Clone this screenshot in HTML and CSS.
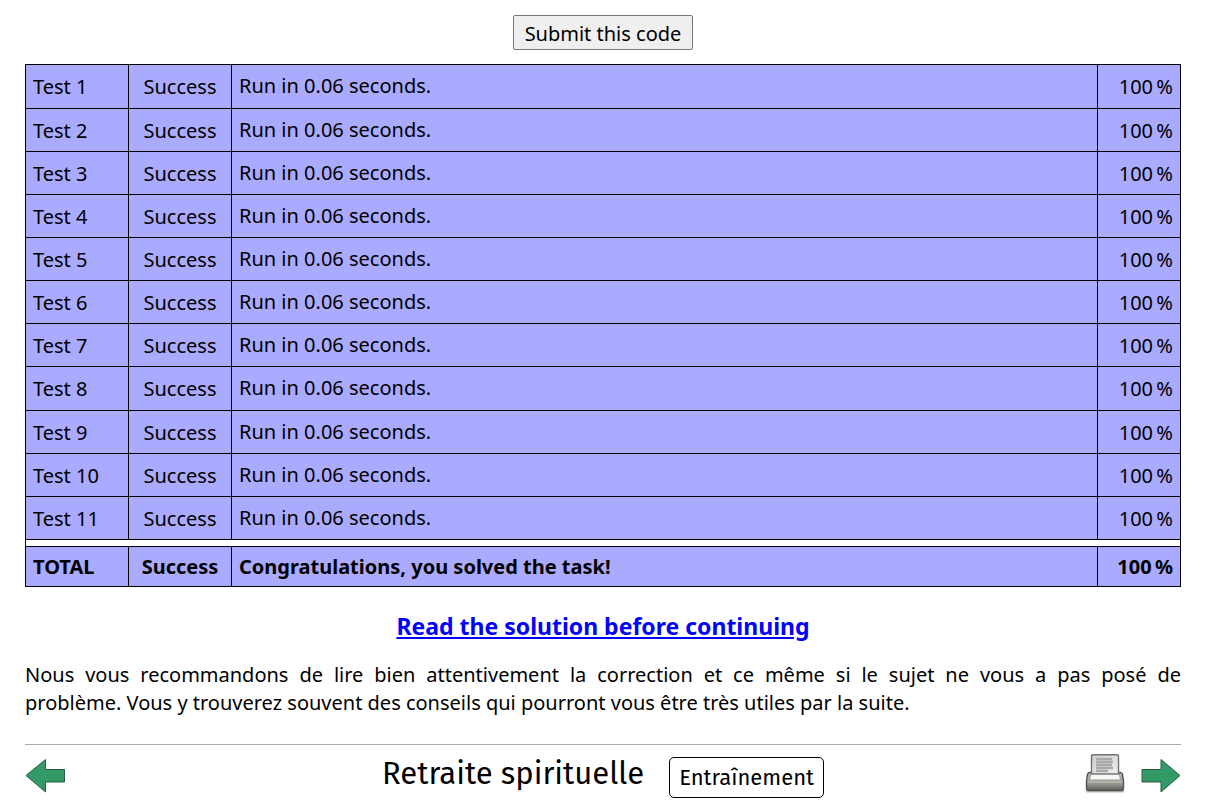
FILE: index.html
```html
<!DOCTYPE html>
<html lang="fr">
<head>
<meta charset="utf-8">
<meta name="viewport" content="width=device-width, initial-scale=1">
<title>Retraite spirituelle</title>
<link rel="stylesheet" href="styles.css">
</head>
<body>
<main>
<form class="submit"><button type="button" class="submit-button">Submit this code</button></form>
<table class="results">
<colgroup><col class="col-name"><col class="col-status"><col><col class="col-score"></colgroup>
<tbody>
<tr><td>Test 1</td><td class="status">Success</td><td class="message">Run in 0.06 seconds.</td><td class="score">100&#8239;%</td></tr>
<tr><td>Test 2</td><td class="status">Success</td><td class="message">Run in 0.06 seconds.</td><td class="score">100&#8239;%</td></tr>
<tr><td>Test 3</td><td class="status">Success</td><td class="message">Run in 0.06 seconds.</td><td class="score">100&#8239;%</td></tr>
<tr><td>Test 4</td><td class="status">Success</td><td class="message">Run in 0.06 seconds.</td><td class="score">100&#8239;%</td></tr>
<tr><td>Test 5</td><td class="status">Success</td><td class="message">Run in 0.06 seconds.</td><td class="score">100&#8239;%</td></tr>
<tr><td>Test 6</td><td class="status">Success</td><td class="message">Run in 0.06 seconds.</td><td class="score">100&#8239;%</td></tr>
<tr><td>Test 7</td><td class="status">Success</td><td class="message">Run in 0.06 seconds.</td><td class="score">100&#8239;%</td></tr>
<tr><td>Test 8</td><td class="status">Success</td><td class="message">Run in 0.06 seconds.</td><td class="score">100&#8239;%</td></tr>
<tr><td>Test 9</td><td class="status">Success</td><td class="message">Run in 0.06 seconds.</td><td class="score">100&#8239;%</td></tr>
<tr><td>Test 10</td><td class="status">Success</td><td class="message">Run in 0.06 seconds.</td><td class="score">100&#8239;%</td></tr>
<tr><td>Test 11</td><td class="status">Success</td><td class="message">Run in 0.06 seconds.</td><td class="score">100&#8239;%</td></tr>
</tbody>
<tfoot>
<tr class="spacer"><td colspan="4"></td></tr>
<tr class="total"><td>TOTAL</td><td class="status">Success</td><td>Congratulations, you solved the task!</td><td class="score">100&#8239;%</td></tr>
</tfoot>
</table>
<p class="solution"><a href="#solution">Read the solution before continuing</a></p>
<p class="advice">Nous vous recommandons de lire bien attentivement la correction et ce même si le sujet ne vous a pas posé de problème.&nbsp;Vous y trouverez souvent des conseils qui pourront vous être très utiles par la suite.</p>
</main>
<footer class="footer">
<nav class="side"><a href="#previous" aria-label="Précédent"><svg class="icon" viewBox="0 0 40 40"><path d="M1 21.500 20.500 5.500V15.500H39.500V28H20.500V38Z" fill="#396" stroke="#285c43" stroke-linejoin="round"/></svg></a></nav>
<div class="heading"><h1 class="title">Retraite spirituelle</h1><span class="tag">Entraînement</span></div>
<nav class="side side-right">
<a href="#print" aria-label="Imprimer"><svg class="icon" viewBox="0 0 40 40">
<defs><linearGradient id="body" x1="0" y1="0" x2="0" y2="1"><stop offset="0" stop-color="#b4b4b0"/><stop offset=".5" stop-color="#a8a8a2"/><stop offset="1" stop-color="#5e5e59"/></linearGradient><linearGradient id="paper" x1="0" y1="0" x2="1" y2="1"><stop offset="0" stop-color="#d0d0d0"/><stop offset="1" stop-color="#eee"/></linearGradient></defs>
<path d="M2 37.500H38" stroke="#bbb" stroke-width="2" stroke-linecap="round"/>
<path d="M4.500 18.500H35.500Q37 18.500 37.500 20.500L38.500 27V34.500Q38.500 36.500 36.500 36.500H3.500Q1.500 36.500 1.500 34.500V27L2.500 20.500Q3 18.500 4.500 18.500Z" fill="url(#body)" stroke="#555550" stroke-width="1.400"/>
<path d="M6.500 20V2Q6.500 .7 8 .7H32Q33.500 .7 33.500 2V20Z" fill="url(#paper)" stroke="#707070" stroke-width="1.400"/>
<path d="M11 5H27M11 8H28M11 11H27M11 14H28M11 17H23" stroke="#aaa" stroke-width="2.600"/>
<path d="M5.500 20.500H34.500L35.500 26H4.500Z" fill="#f7f7f7" stroke="#999"/>
<path d="M3 28H37" stroke="#bdbdb8"/></svg></a>
<a href="#next" aria-label="Suivant"><svg class="icon" viewBox="0 0 40 40"><path d="M39 21.500 20 5.500V15.500H1V28H20V38Z" fill="#396" stroke="#285c43" stroke-linejoin="round"/></svg></a>
</nav>
</footer>
</body>
</html>
```
FILE: styles.css
```css
* { box-sizing: border-box; }

body {
  margin: 0;
  padding: 15px 26px 0 25px;
  background: #fff;
  color: #000;
  font: 20px/28px "Noto Sans", sans-serif;
}

.submit {
  display: flex;
  justify-content: center;
  margin-bottom: 14px;
}

.submit-button {
  padding: 4px 11px 2px;
  border: 1px solid #767676;
  border-radius: 2px;
  background: #efefef;
  color: #000;
  font: inherit;
  line-height: 27px;
}

.results {
  width: 100%;
  border-collapse: collapse;
  table-layout: fixed;
}

.col-name, .col-status { width: 103px; }
.col-score { width: 83px; }

.results td {
  height: 43px;
  padding: 1px 7px 0;
  border: 1px solid #000;
  background: #aaf;
}

.results tbody tr:nth-child(7n + 1) td { height: 44px; }

.results .message { padding: 0 7px 1px; }
.results .status { text-align: center; }
.results .score { text-align: right; }

.results .spacer td {
  height: 7px;
  padding: 0;
  background: #fff;
}

.results .total td {
  height: 40px;
  font-weight: bold;
}

.solution {
  margin: 24px 0 20px;
  font-size: 23px;
  line-height: 30px;
  font-weight: bold;
  text-align: center;
}

.solution a { color: #00f; }

.advice {
  margin: 0;
  text-align: justify;
}

.footer {
  display: flex;
  justify-content: space-between;
  margin-top: 27px;
  padding-top: 8px;
  border-top: 1px solid #aaa;
}

.side {
  display: flex;
  flex: 1;
  gap: 16px;
}

.side-right { justify-content: flex-end; }

.icon {
  display: block;
  width: 40px;
  height: 40px;
  margin-top: 1px;
}

.heading {
  display: flex;
  gap: 25px;
  font-family: "Fira Sans", "Open Sans", "Noto Sans", sans-serif;
}

.title {
  margin: 0;
  font-size: 31px;
  line-height: 42px;
  font-weight: normal;
}

.tag {
  margin-top: 4px;
  padding: 0 9px;
  border: 1px solid #000;
  border-radius: 5px;
  font-size: 22px;
  line-height: 39px;
}
```
